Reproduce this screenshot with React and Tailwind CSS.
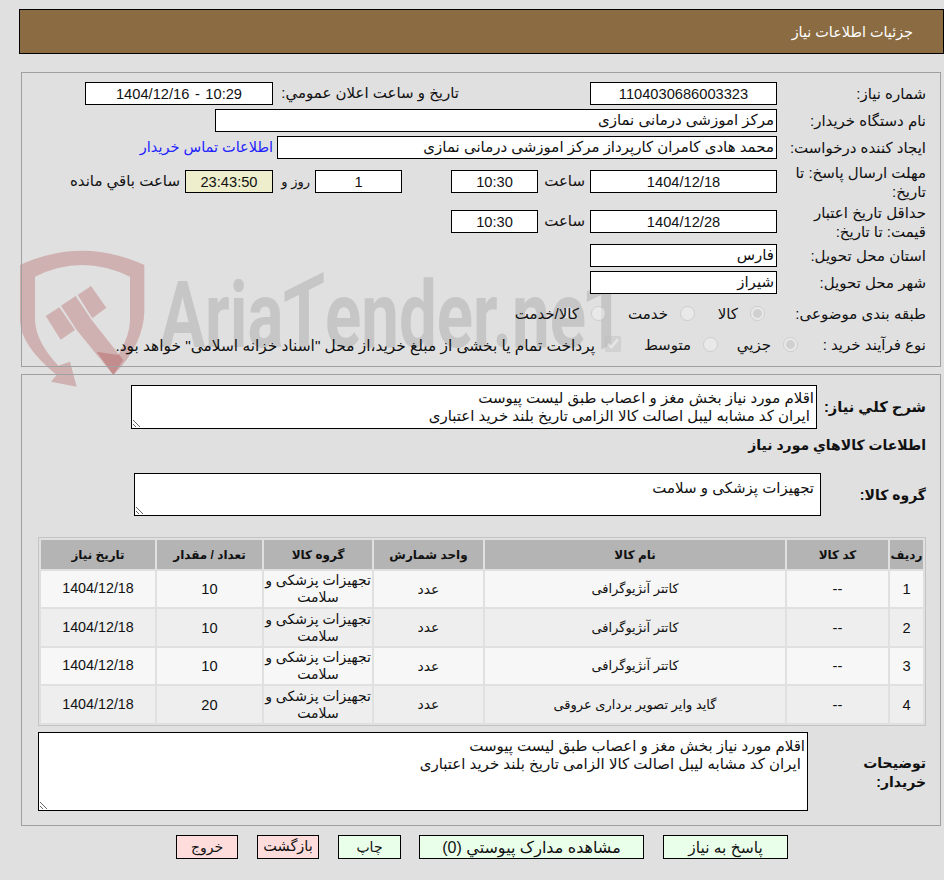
const F = '[font-family:"Liberation_Sans","DejaVu_Sans",sans-serif]';

function Box({ w, children, className = "" }) {
  return (
    <div className={`h-[23px] shrink-0 border border-black bg-white px-[2px] flex items-center overflow-hidden whitespace-nowrap ${w} ${className}`}>
      {children}
    </div>
  );
}
function Num({ w, children, className = "" }) {
  return <Box w={w} className={`justify-center text-[14.67px] ${className}`}>{children}</Box>;
}
function Label({ children, w = "w-[149px]" }) {
  return <div className={`${w} shrink-0 pl-[8px] leading-[19px]`}>{children}</div>;
}
function Radio({ checked, label, w }) {
  return (
    <div className={`flex items-center gap-[12px] ${w}`}>
      <input type="radio" disabled checked={checked} readOnly className="m-0 size-[15px] opacity-70" />
      <span className="pt-[3px]">{label}</span>
    </div>
  );
}

const rows = [
  ["1", "کاتتر آنژیوگرافی", "10"],
  ["2", "کاتتر آنژیوگرافی", "10"],
  ["3", "کاتتر آنژیوگرافی", "10"],
  ["4", "گاید وایر تصویر برداری عروقی", "20"],
];
const desc = "اقلام مورد نیاز بخش مغز و اعصاب طبق لیست پیوست\n ایران کد مشابه لیبل اصالت کالا الزامی تاریخ بلند خرید اعتباری";

function Watermark() {
  return (
    <>
      <svg viewBox="0 0 420 450" className="absolute left-[15px] top-[245px] h-[150px] w-[140px]">
        <g fill="#a01e1e" fillOpacity="0.24">
          <path d="M15 60 Q200 -25 388 60 L388 200 Q385 300 295 390 L245 320 L310 330 Q345 270 345 225 L345 95 Q200 25 60 95 L60 225 Q62 290 130 362 L165 350 L185 425 L108 410 L125 390 Q15 300 15 225 Z" />
          <path d="M185 255 L230 225 L325 345 L295 390 Z" />
          <path d="M138 182 L182 153 L230 225 L185 255 Z" />
          <path d="M188 150 L228 123 L274 188 L232 220 Z" />
          <path d="M92 213 L133 187 L180 255 L137 284 Z" />
        </g>
      </svg>
      <div dir="ltr" className="absolute left-[160px] top-[261px] w-[660px] origin-top-left scale-x-[0.73] whitespace-nowrap text-[92px] font-bold leading-[110px] text-[#c6c6c6] [font-family:Roboto,sans-serif]">
        Aria<span className="inline-block -skew-y-[20deg]">T</span>ender.ne<span className="inline-block -skew-y-[20deg]">T</span>
      </div>
    </>
  );
}

export default function App() {
  return (
    <div dir="rtl" className={`relative h-[880px] w-[944px] overflow-hidden bg-[#e0e0e0] text-[15px] text-[#111] ${F}`}>
      <Watermark />
      <div className="absolute left-[19px] top-[9px] h-[45px] w-[925px] flex items-center border border-black bg-[#8b6c42] pr-[30px] pt-[2px] text-[14.4px] text-white">
        جزئیات اطلاعات نیاز
      </div>
      <div className="relative">
        <div className="h-[72px]" />
        <div className="ml-[21px] mr-[3px] h-[295px] border border-[#a0a0a0] pr-[14px] pt-[9px]">
          <div className="flex h-[23px] items-center">
            <Label>شماره نیاز:</Label>
            <Num w="w-[187px]">1104030686003323</Num>
            <div className="w-[131px]" />
            <div className="w-[186px] whitespace-nowrap">تاریخ و ساعت اعلان عمومي:</div>
            <Num w="w-[188px]"><span dir="ltr" className="[word-spacing:1.5px]">1404/12/16 - 10:29</span></Num>
          </div>
          <div className="mt-[4px] flex h-[23px] items-center">
            <Label>نام دستگاه خریدار:</Label>
            <Box w="w-[562px]">مرکز اموزشی درمانی نمازی</Box>
          </div>
          <div className="mt-[4px] flex h-[23px] items-center">
            <Label>ایجاد کننده درخواست:</Label>
            <Box w="w-[500px]">محمد هادی کامران کارپرداز مرکز اموزشی درمانی نمازی</Box>
            <span className="mr-[4px] whitespace-nowrap text-[14.5px] text-[#2222ff]">اطلاعات تماس خریدار</span>
          </div>
          <div className="mt-[4px] flex h-[37px] items-center">
            <Label>مهلت ارسال پاسخ: تا تاریخ:</Label>
            <Num w="w-[187px]">1404/12/18</Num>
            <span className="w-[52px] pr-[5px]">ساعت</span>
            <Num w="w-[87px]">10:30</Num>
            <div className="w-[49px]" />
            <Num w="w-[87px]">1</Num>
            <span className="w-[42px] pr-[5px] text-[13px]">روز و</span>
            <Num w="w-[88px]" className="!bg-[#eeeecc]">23:43:50</Num>
            <span className="mr-[5px] whitespace-nowrap">ساعت باقي مانده</span>
          </div>
          <div className="mt-[3px] flex h-[37px] items-center">
            <Label>حداقل تاریخ اعتبار قیمت: تا تاریخ:</Label>
            <Num w="w-[187px]">1404/12/28</Num>
            <span className="w-[52px] pr-[5px]">ساعت</span>
            <Num w="w-[87px]">10:30</Num>
          </div>
          <div className="mt-[4px] flex h-[23px] items-center">
            <Label>استان محل تحویل:</Label>
            <Box w="w-[187px]">فارس</Box>
          </div>
          <div className="mt-[4px] flex h-[23px] items-center">
            <Label>شهر محل تحویل:</Label>
            <Box w="w-[187px]">شیراز</Box>
          </div>
          <div className="mt-[6px] flex h-[26px] items-center">
            <Label>طبقه بندی موضوعی:</Label>
            <div className="w-[12px]" />
            <Radio checked label="کالا" w="w-[70px]" />
            <Radio label="خدمت" w="w-[89px]" />
            <Radio label="کالا/خدمت" />
          </div>
          <div className="mt-[5px] flex h-[26px] items-center">
            <Label w="w-[128px]">نوع فرآیند خرید :</Label>
            <Radio checked label="جزيي" w="w-[80px]" />
            <Radio label="متوسط" w="w-[97px]" />
            <div className="flex items-center gap-[10px] whitespace-nowrap">
              <input type="checkbox" disabled checked readOnly className="m-0 size-[16px] opacity-60" />
              <span className="pt-[3px] text-[15.4px]">پرداخت تمام یا بخشی از مبلغ خرید،از محل "اسناد خزانه اسلامی" خواهد بود.</span>
            </div>
          </div>
        </div>

        <div className="ml-[21px] mr-[3px] mt-[7px] h-[452px] border border-[#a0a0a0] pr-[14px] pt-[10px]">
          <div className="flex h-[44px] items-center">
            <div className="w-[109px] shrink-0 text-[14.7px] font-bold">شرح كلي نياز:</div>
            <textarea readOnly value={desc} className="h-[44px] w-[686px] border border-black bg-white px-[2px] pt-[3px] leading-[18px] outline-none" />
          </div>
          <div className="mt-[6px] h-[19px] text-[14px] font-bold">اطلاعات كالاهاي مورد نياز</div>
          <div className="mt-[19px] flex h-[43px] items-center">
            <div className="w-[105px] shrink-0 pt-[2px] text-[14px] font-bold">گروه کالا:</div>
            <textarea readOnly value="تجهیزات پزشکی و سلامت" className="h-[43px] w-[687px] border border-black bg-white px-[6px] py-[3px] outline-none" />
          </div>
          <table className="mt-[21px] w-[887px] table-fixed border-separate border-spacing-[2px] border border-[#c4c4c4] text-center text-[14px]">
            <colgroup>
              <col className="w-[33px]" /><col className="w-[101px]" /><col className="w-[300px]" /><col className="w-[109px]" /><col className="w-[108px]" /><col className="w-[105px]" /><col className="w-[114px]" />
            </colgroup>
            <thead>
              <tr className="h-[29px] bg-[#b4b4b4] text-[12px] font-bold">
                {["ردیف", "کد کالا", "نام کالا", "واحد شمارش", "گروه کالا", "تعداد / مقدار", "تاریخ نیاز"].map((h) => (
                  <th key={h} className="p-0 pt-[1px] whitespace-nowrap">{h}</th>
                ))}
              </tr>
            </thead>
            <tbody>
              {rows.map(([n, name, q], i) => (
                <tr key={n} className={i % 2 ? "h-[37px] bg-[#eeeeee]" : "h-[36px] bg-[#f7f7f7]"}>
                  <td className="p-0 text-[14.67px]">{n}</td>
                  <td className="p-0 text-[14.67px]">--</td>
                  <td className="p-0 text-[13px]">{name}</td>
                  <td className="p-0">عدد</td>
                  <td className="p-0 leading-[17px]">تجهیزات پزشکی و سلامت</td>
                  <td className="p-0 text-[14.67px]">{q}</td>
                  <td className="p-0 text-[14.3px]">1404/12/18</td>
                </tr>
              ))}
            </tbody>
          </table>
          <div className="mt-[6px] flex h-[79px] items-center">
            <div className="w-[118px] shrink-0 pl-[30px] pt-[2px] text-[14px] font-bold leading-[19px]">توضیحات خریدار:</div>
            <textarea readOnly value={desc} className="h-[79px] w-[770px] border border-black bg-white px-[2px] pt-[4px] leading-[18px] outline-none" />
          </div>
        </div>

        <div className="mt-[9px] flex h-[24px] gap-[19px] pr-[156px] text-center">
          <button className="h-[24px] w-[125px] border border-black bg-[#eaffea] text-[15.5px]">پاسخ به نياز</button>
          <button className="h-[24px] w-[225px] border border-black bg-[#eaffea] text-[16px]">مشاهده مدارک پیوستي (0)</button>
          <button className="h-[24px] w-[63px] -mr-px border border-black bg-[#eaffea] text-[14px]">چاپ</button>
          <button className="h-[24px] w-[62px] border border-black bg-[#ffdcdc] text-[14.5px]">بازگشت</button>
          <button className="h-[24px] w-[62px] border border-black bg-[#ffdcdc] text-[14px]">خروج</button>
        </div>
      </div>
    </div>
  );
}
